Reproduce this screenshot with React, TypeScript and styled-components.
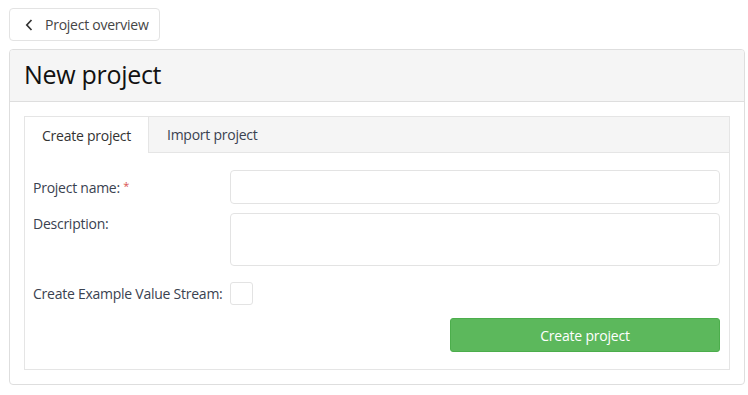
import React from "react";
import styled, { createGlobalStyle } from "styled-components";

const Global = createGlobalStyle`
  html, body { margin: 0; padding: 0; background: #fff; }
  body { font-family: "Open Sans", "Noto Sans", sans-serif; color: #333; font-size: 14px; letter-spacing: -0.25px; }
  * { box-sizing: border-box; }
`;

const Page = styled.div`
  padding: 8px 3px 0 9px;
  display: flex;
  flex-direction: column;
  align-items: flex-start;
  gap: 8px;
`;

const BackButton = styled.button`
  height: 33px;
  width: 151px;
  display: flex;
  align-items: center;
  gap: 11px;
  padding: 0 0 0 15px;
  border: 1px solid #e3e3e3;
  border-radius: 4px;
  background: #fff;
  font-family: inherit;
  font-size: 14px;
  letter-spacing: -0.25px;
  color: #454545;
`;

const Panel = styled.section`
  width: 736px;
  border: 1px solid #dedede;
  border-radius: 4px;
  overflow: hidden;
`;

const PanelHeader = styled.header`
  height: 52px;
  background: #f5f5f5;
  border-bottom: 1px solid #dedede;
  display: flex;
  align-items: center;
  padding: 0 14px 4px 14px;
`;

const Title = styled.h1`
  margin: 0;
  font-size: 25px;
  font-weight: 400;
  letter-spacing: -0.3px;
  color: #111;
`;

const PanelBody = styled.div`
  padding: 14px;
`;

const TabBox = styled.div`
  border: 1px solid #e5e5e5;
`;

const TabBar = styled.div`
  display: flex;
  height: 36px;
  background: #f5f5f5;
  border-bottom: 1px solid #e5e5e5;
`;

const Tab = styled.div<{ $active?: boolean }>`
  display: flex;
  align-items: center;
  padding: 0 ${(p) => (p.$active ? "17px" : "18px")};
  height: ${(p) => (p.$active ? "36px" : "35px")};
  background: ${(p) => (p.$active ? "#fff" : "transparent")};
  border-right: ${(p) => (p.$active ? "1px solid #e5e5e5" : "none")};
  color: ${(p) => (p.$active ? "#333" : "#3a4250")};
  font-size: 14px;
`;

const Form = styled.div`
  padding: 17px 9px 17px 8px;
  display: flex;
  flex-direction: column;
  gap: 9px;
`;

const Row = styled.div<{ $top?: boolean; $gap?: number }>`
  display: grid;
  grid-template-columns: 197px 1fr;
  align-items: ${(p) => (p.$top ? "start" : "center")};
  margin-top: ${(p) => (p.$gap ? `${p.$gap}px` : "0")};
`;

const Label = styled.label<{ $top?: boolean }>`
  color: #3a4250;
  font-size: 14px;
  padding-top: ${(p) => (p.$top ? "1px" : "0")};
`;

const Required = styled.span`
  color: #d9534f;
  font-size: 11px;
  vertical-align: 3px;
`;

const Input = styled.input`
  height: 34px;
  border: 1px solid #e3e3e3;
  border-radius: 4px;
  width: 100%;
`;

const TextArea = styled.textarea`
  height: 53px;
  border: 1px solid #e3e3e3;
  border-radius: 4px;
  width: 100%;
  resize: none;
`;

const Check = styled.span`
  display: block;
  width: 23px;
  height: 23px;
  border: 1px solid #e3e3e3;
  border-radius: 3px;
`;

const Actions = styled.div`
  display: flex;
  justify-content: flex-end;
  margin-top: 4px;
`;

const Primary = styled.button`
  width: 270px;
  height: 34px;
  border: 1px solid #4cae4c;
  border-radius: 3px;
  background: #5cb85c;
  color: #fff;
  font-family: inherit;
  font-size: 14px;
  letter-spacing: -0.2px;
`;

export default function App() {
  return (
    <>
      <Global />
      <Page>
        <BackButton>
          <svg width="9" height="14" viewBox="0 0 9 14">
            <path d="M6.5 2 L1.8 7 L6.5 12" fill="none" stroke="#333" strokeWidth="1.7" />
          </svg>
          Project overview
        </BackButton>
        <Panel>
          <PanelHeader>
            <Title>New project</Title>
          </PanelHeader>
          <PanelBody>
            <TabBox>
              <TabBar>
                <Tab $active>Create project</Tab>
                <Tab>Import project</Tab>
              </TabBar>
              <Form>
                <Row>
                  <Label>
                    Project name: <Required>*</Required>
                  </Label>
                  <Input />
                </Row>
                <Row $top>
                  <Label $top>Description:</Label>
                  <TextArea />
                </Row>
                <Row $gap={7}>
                  <Label>Create Example Value Stream:</Label>
                  <Check />
                </Row>
                <Actions>
                  <Primary>Create project</Primary>
                </Actions>
              </Form>
            </TabBox>
          </PanelBody>
        </Panel>
      </Page>
    </>
  );
}
